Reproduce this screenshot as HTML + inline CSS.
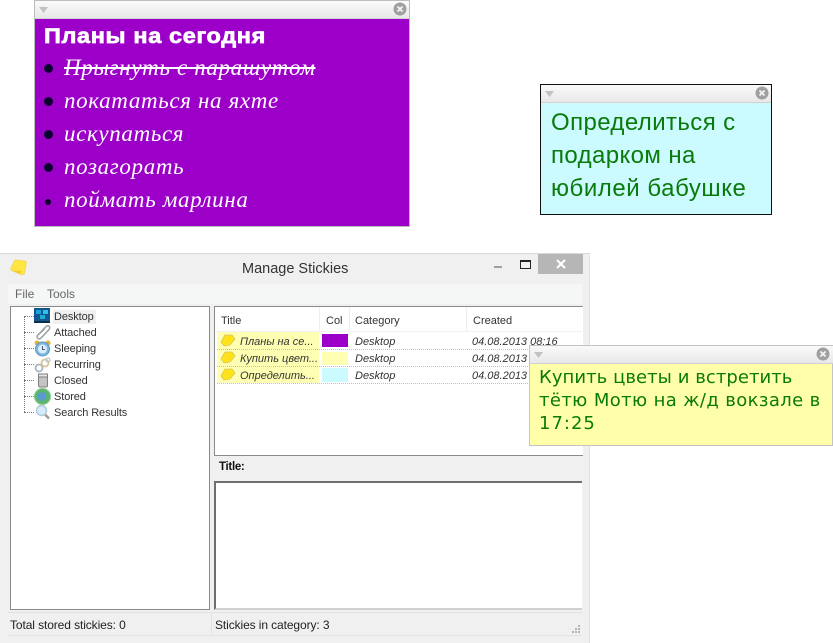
<!DOCTYPE html>
<html><head><meta charset="utf-8">
<style>
html,body{margin:0;padding:0;background:#fff;}
#p{position:relative;width:833px;height:643px;overflow:hidden;background:#fff;font-family:"Liberation Sans",sans-serif;}
#p div,#p svg{position:absolute;}
.t{white-space:nowrap;line-height:1;}
.bar{background:linear-gradient(#fafafa,#e8e8e8);border-bottom:1px solid #d2d2d2;}
.hw{font-family:"Liberation Serif",serif;font-style:italic;font-size:23px;color:#fff;letter-spacing:.65px;left:64px;}
.bl{width:9px;height:9px;border-radius:50%;background:#0c0030;left:44px;}
.tr{font-size:11px;color:#333;left:54px;letter-spacing:-.1px;}
.hd{font-size:11px;color:#333;top:316px;}
.c{font-size:11px;font-style:italic;color:#333;}
.rowb{left:217px;width:365px;height:0;border-bottom:1px dotted #c0c0c0;}
.g{color:#0a7a0a;}
.dl{left:24px;width:10px;border-top:1px dotted #777;}
</style></head><body><div id="p">

<!-- Manage Stickies window -->
<div style="left:0;top:253px;width:590px;height:390px;background:#f0f0f0;border-top:1px solid #d8d8d8;box-sizing:border-box;border-right:1px solid #e2e2e2;"></div>
<svg style="left:9px;top:258px" width="20" height="19" viewBox="0 0 20 19"><path d="M6 2L16 3C17.500 3.500 17.500 5 17 7L15.500 15C15 17 13 17 11 16L3 12.500C1 11.500 1.500 10.500 2.500 9Z" fill="#ffe640" stroke="#f3d860" stroke-linejoin="round"/><path d="M3 12.500L11 16L13 13Z" fill="#f2cc30"/></svg>
<div class="t" style="left:242px;top:262px;font-size:14.500px;color:#333;">Manage Stickies</div>
<div style="left:494px;top:266px;width:8px;height:2px;background:#a0a0a0;"></div>
<div style="left:520px;top:260px;width:9px;height:6px;border:1px solid #222;border-top-width:2px;"></div>
<div style="left:538px;top:254px;width:45px;height:20px;background:#b6b6b6;"></div>
<svg style="left:556px;top:259px" width="10" height="10" viewBox="0 0 10 10"><path d="M1 1L9 9M9 1L1 9" stroke="#fff" stroke-width="2"/></svg>

<div style="left:8px;top:284px;width:574px;height:20px;background:#f5f6f6;"></div>
<div class="t" style="left:15px;top:288px;font-size:12px;color:#666;">File</div>
<div class="t" style="left:47px;top:288px;font-size:12px;color:#666;">Tools</div>

<!-- Tree -->
<div style="left:10px;top:306px;width:198px;height:302px;background:#fff;border:1px solid #8a8a8a;"></div>
<div style="left:24px;top:316px;height:96px;width:0;border-left:1px dotted #777;"></div>
<div class="dl" style="top:316px;"></div>
<div class="dl" style="top:332px;"></div>
<div class="dl" style="top:348px;"></div>
<div class="dl" style="top:364px;"></div>
<div class="dl" style="top:380px;"></div>
<div class="dl" style="top:396px;"></div>
<div class="dl" style="top:412px;"></div>

<div style="left:53px;top:310px;width:43px;height:14px;background:#f0f0f0;"></div>
<svg style="left:33px;top:308px" width="18" height="16" viewBox="0 0 18 16"><rect x="1" y="0" width="16" height="15" fill="#14568e"/><rect x="3" y="2" width="5" height="4" fill="#17a3dc"/><rect x="10" y="2" width="5" height="4" fill="#2fc1ea"/><rect x="7" y="7" width="5" height="4" fill="#19b0d8"/><rect x="1" y="13" width="16" height="2" fill="#0c2f4c"/></svg>
<svg style="left:34px;top:324px" width="18" height="17" viewBox="0 0 18 17"><path d="M3 12L12 2.500C14.500 0.500 17 3 15 5.500L7 14C5 16 2 14 3.500 11.500L11 4.500" fill="none" stroke="#9a9fa2" stroke-width="1.500"/></svg>
<svg style="left:34px;top:340px" width="17" height="17" viewBox="0 0 17 17"><circle cx="3" cy="3" r="2.500" fill="#e2b23f"/><circle cx="14" cy="3" r="2.500" fill="#e2b23f"/><circle cx="8.500" cy="9" r="7" fill="#7db8e2" stroke="#5f95bd"/><circle cx="8.500" cy="9" r="4.500" fill="#dceefa"/><path d="M8.500 6V9.500H11" fill="none" stroke="#557" stroke-width="1"/></svg>
<svg style="left:34px;top:357px" width="18" height="16" viewBox="0 0 18 16"><circle cx="5" cy="11" r="3.500" fill="none" stroke="#a5b6c2" stroke-width="1.800"/><circle cx="11" cy="6" r="3.500" fill="none" stroke="#d6c594" stroke-width="1.800"/><circle cx="14" cy="3" r="2" fill="none" stroke="#bcc6cc" stroke-width="1.200"/></svg>
<svg style="left:37px;top:373px" width="12" height="15" viewBox="0 0 12 15"><rect x="1.500" y="1" width="9" height="13" rx="1.500" fill="#c4c4c4" stroke="#7f7f7f"/><rect x="1.500" y="1" width="9" height="3" fill="#e5e5e5" stroke="#7f7f7f"/></svg>
<svg style="left:34px;top:388px" width="17" height="17" viewBox="0 0 17 17"><circle cx="8.500" cy="8.500" r="8" fill="#5cb56c" stroke="#88cc90"/><circle cx="8" cy="8.500" r="4.500" fill="#5a9ccc"/></svg>
<svg style="left:35px;top:404px" width="16" height="16" viewBox="0 0 16 16"><path d="M9.500 10L14 14.500" stroke="#a89a88" stroke-width="2.400"/><circle cx="6.500" cy="6.500" r="5" fill="#d8ebf8" stroke="#adc9dc" stroke-width="1.400"/></svg>

<div class="t tr" style="top:312px;">Desktop</div>
<div class="t tr" style="top:328px;">Attached</div>
<div class="t tr" style="top:344px;">Sleeping</div>
<div class="t tr" style="top:360px;">Recurring</div>
<div class="t tr" style="top:376px;">Closed</div>
<div class="t tr" style="top:392px;">Stored</div>
<div class="t tr" style="top:408px;">Search Results</div>

<!-- List -->
<div style="left:214px;top:306px;width:368px;height:148px;background:#fff;border:1px solid #8a8a8a;border-right:none;"></div>
<div style="left:319px;top:307px;width:1px;height:24px;background:#eeeeee;"></div>
<div style="left:349px;top:307px;width:1px;height:24px;background:#eeeeee;"></div>
<div style="left:466px;top:307px;width:1px;height:24px;background:#eeeeee;"></div>
<div style="left:215px;top:331px;width:367px;height:1px;background:#f0f0f0;"></div>
<div class="t hd" style="left:221px;">Title</div>
<div class="t hd" style="left:326px;">Col</div>
<div class="t hd" style="left:355px;">Category</div>
<div class="t hd" style="left:473px;">Created</div>

<div style="left:217px;top:332px;width:102px;height:51px;background:#ffffb4;"></div>
<div class="rowb" style="top:349px;"></div>
<div class="rowb" style="top:366px;"></div>
<div class="rowb" style="top:383px;"></div>
<div style="left:322px;top:334px;width:26px;height:13px;background:#9c00c8;"></div>
<div style="left:322px;top:352px;width:26px;height:13px;background:#ffffb4;"></div>
<div style="left:322px;top:368px;width:26px;height:14px;background:#ccfbff;"></div>

<svg style="left:220px;top:334px" width="16" height="13" viewBox="0 0 16 13"><path d="M5 1H12L15 5L10 11L4 12L1 8Z" fill="#ffe21a" stroke="#d6c75a" stroke-width=".8" stroke-linejoin="round"/></svg>
<svg style="left:220px;top:351px" width="16" height="13" viewBox="0 0 16 13"><path d="M5 1H12L15 5L10 11L4 12L1 8Z" fill="#ffe21a" stroke="#d6c75a" stroke-width=".8" stroke-linejoin="round"/></svg>
<svg style="left:220px;top:368px" width="16" height="13" viewBox="0 0 16 13"><path d="M5 1H12L15 5L10 11L4 12L1 8Z" fill="#ffe21a" stroke="#d6c75a" stroke-width=".8" stroke-linejoin="round"/></svg>

<div class="t c" style="left:240px;top:337px;">Планы на се...</div>
<div class="t c" style="left:240px;top:354px;">Купить цвет...</div>
<div class="t c" style="left:240px;top:371px;">Определить...</div>
<div class="t c" style="left:355px;top:337px;">Desktop</div>
<div class="t c" style="left:355px;top:354px;">Desktop</div>
<div class="t c" style="left:355px;top:371px;">Desktop</div>
<div class="t c" style="left:472px;top:337px;">04.08.2013 08:16</div>
<div class="t c" style="left:472px;top:354px;">04.08.2013</div>
<div class="t c" style="left:472px;top:371px;">04.08.2013</div>

<!-- Detail -->
<div class="t" style="left:219px;top:462px;font-size:11.500px;font-weight:bold;color:#111;letter-spacing:-.3px;">Title:</div>
<div style="left:214px;top:481px;width:368px;height:129px;background:#fff;border-top:2px solid #6f6f6f;border-left:2px solid #6f6f6f;border-bottom:2px solid #d0d0d0;box-sizing:border-box;"></div>

<!-- Status -->
<div style="left:8px;top:612px;width:574px;height:1px;background:#e2e2e2;"></div>
<div style="left:211px;top:612px;width:1px;height:24px;background:#e2e2e2;"></div>
<div style="left:8px;top:635px;width:574px;height:1px;background:#e2e2e2;"></div>
<div class="t" style="left:10px;top:619px;font-size:12px;color:#222;letter-spacing:-.1px;">Total stored stickies: 0</div>
<div class="t" style="left:215px;top:619px;font-size:12px;color:#222;letter-spacing:-.1px;">Stickies in category: 3</div>
<svg style="left:571px;top:624px" width="10" height="10" viewBox="0 0 10 10" fill="#b5b5b5"><rect x="7" y="1" width="2" height="2"/><rect x="4" y="4" width="2" height="2"/><rect x="7" y="4" width="2" height="2"/><rect x="1" y="7" width="2" height="2"/><rect x="4" y="7" width="2" height="2"/><rect x="7" y="7" width="2" height="2"/></svg>

<!-- Sticky 1 -->
<div style="left:34px;top:0;width:376px;height:227px;background:#9c00c8;border:1px solid #bdbdbd;box-sizing:border-box;"></div>
<div class="bar" style="left:35px;top:1px;width:374px;height:17px;"></div>
<svg style="left:39px;top:7px" width="9" height="6" viewBox="0 0 9 6"><path d="M0 0H9L4.500 6Z" fill="#c2c2c2"/></svg>
<svg style="left:393px;top:2px" width="14" height="14" viewBox="0 0 14 14"><circle cx="7" cy="7" r="6.500" fill="#a0a0a0"/><path d="M4.500 4.500L9.500 9.500M9.500 4.500L4.500 9.500" stroke="#f4f4f4" stroke-width="1.800"/></svg>
<div class="t" style="left:44px;top:26px;font-size:21px;font-weight:bold;color:#fff;letter-spacing:.6px;-webkit-text-stroke:.7px #fff;transform:scaleX(1.115);transform-origin:0 0;">Планы на сегодня</div>
<div class="bl" style="top:64px;"></div>
<div class="bl" style="top:97px;"></div>
<div class="bl" style="top:130px;"></div>
<div class="bl" style="top:163px;"></div>
<div class="bl" style="top:199px;width:6px;height:6px;left:45px;"></div>
<div class="t hw" style="top:56px;text-decoration:line-through;">Прыгнуть с парашутом</div>
<div class="t hw" style="top:89px;">покататься на яхте</div>
<div class="t hw" style="top:122px;">искупаться</div>
<div class="t hw" style="top:155px;">позагорать</div>
<div class="t hw" style="top:188px;">поймать марлина</div>

<!-- Sticky 2 -->
<div style="left:540px;top:84px;width:232px;height:131px;background:#ccfbff;border:1px solid #111;box-sizing:border-box;"></div>
<div class="bar" style="left:541px;top:85px;width:230px;height:17px;"></div>
<svg style="left:545px;top:91px" width="9" height="6" viewBox="0 0 9 6"><path d="M0 0H9L4.500 6Z" fill="#c2c2c2"/></svg>
<svg style="left:755px;top:86px" width="14" height="14" viewBox="0 0 14 14"><circle cx="7" cy="7" r="6.500" fill="#a0a0a0"/><path d="M4.500 4.500L9.500 9.500M9.500 4.500L4.500 9.500" stroke="#f4f4f4" stroke-width="1.800"/></svg>
<div class="t g" style="left:551px;top:111px;font-size:24px;letter-spacing:.4px;">Определиться с</div>
<div class="t g" style="left:551px;top:144px;font-size:24px;letter-spacing:.4px;">подарком на</div>
<div class="t g" style="left:551px;top:177px;font-size:24px;letter-spacing:.55px;">юбилей бабушке</div>

<!-- Sticky 3 -->
<div style="left:529px;top:345px;width:304px;height:101px;background:#ffffaa;border:1px solid #c4c4c4;box-sizing:border-box;"></div>
<div class="bar" style="left:530px;top:346px;width:303px;height:17px;"></div>
<svg style="left:534px;top:352px" width="9" height="6" viewBox="0 0 9 6"><path d="M0 0H9L4.500 6Z" fill="#c2c2c2"/></svg>
<svg style="left:816px;top:347px" width="14" height="14" viewBox="0 0 14 14"><circle cx="7" cy="7" r="6.500" fill="#a0a0a0"/><path d="M4.500 4.500L9.500 9.500M9.500 4.500L4.500 9.500" stroke="#f4f4f4" stroke-width="1.800"/></svg>
<div class="t g" style="left:539px;top:369px;font-family:'DejaVu Sans',sans-serif;font-size:18px;letter-spacing:.05px;">Купить цветы и встретить</div>
<div class="t g" style="left:539px;top:392px;font-family:'DejaVu Sans',sans-serif;font-size:18px;letter-spacing:.38px;">тётю Мотю на ж/д вокзале в</div>
<div class="t g" style="left:539px;top:415px;font-family:'DejaVu Sans',sans-serif;font-size:18px;letter-spacing:1px;">17:25</div>

</div></body></html>
